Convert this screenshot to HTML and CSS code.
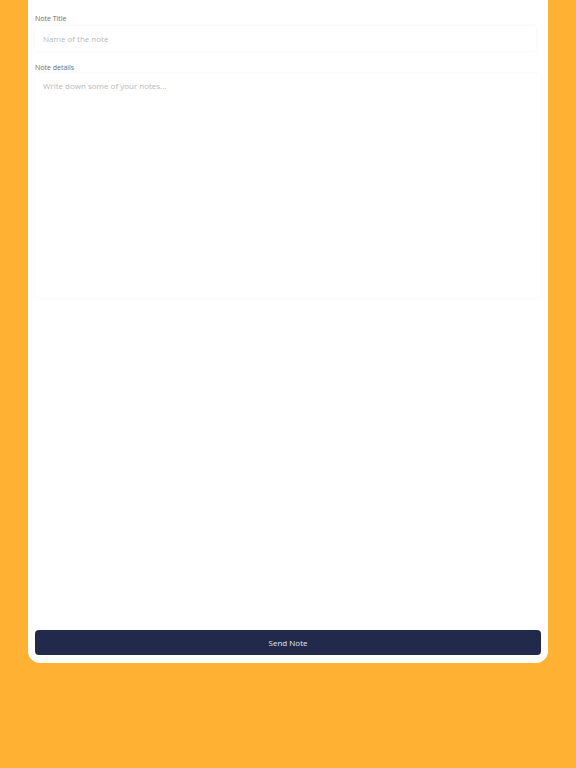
FILE: index.html
```html
<!DOCTYPE html>
<html>
<head>
<meta charset="utf-8">
<link rel="stylesheet" href="styles.css">
</head>
<body>
<div class="card">
  <label class="label">Note Title</label>
  <div class="input"><span class="ph">Name of the note</span></div>
  <label class="label label-details">Note details</label>
  <div class="textarea"><span class="ph">Write down some of your notes...</span></div>
  <div class="spacer"></div>
  <button class="btn">Send Note</button>
</div>
</body>
</html>
```
FILE: styles.css
```css
html, body {
  margin: 0;
  padding: 0;
  background: #feb133;
  height: 768px;
  overflow: hidden;
  font-family: "Open Sans", "Noto Sans", sans-serif;
}
.card {
  margin: 0 28px;
  height: 663px;
  box-sizing: border-box;
  background: #ffffff;
  border-radius: 0 0 12px 12px;
  padding: 14px 7px 8px;
  display: flex;
  flex-direction: column;
}
.label {
  display: block;
  font-size: 7px;
  line-height: 10px;
  color: #6b6b6b;
  margin-bottom: 2px;
}
.label-details {
  margin-top: 12px;
  margin-bottom: 0;
}
.input {
  height: 25px;
  margin-right: 5px;
  border-radius: 3px;
  box-shadow: 0 0 3px rgba(0, 0, 0, 0.06);
  display: flex;
  align-items: center;
  padding-left: 8px;
}
.textarea {
  height: 225px;
  border-radius: 4px;
  box-shadow: 0 0 3px rgba(0, 0, 0, 0.045);
  padding: 8px 8px;
  box-sizing: border-box;
  font-size: 8px;
  line-height: 10px;
}
.ph {
  font-size: 8px;
  line-height: 10px;
  color: #b9b9b9;
}
.spacer {
  flex: 1;
}
.btn {
  height: 25px;
  border: none;
  border-radius: 4px;
  background: #222a4b;
  color: #e4e7f0;
  font-family: "Open Sans", "Noto Sans", sans-serif;
  font-size: 8px;
  font-weight: 500;
  padding: 0;
}
```
